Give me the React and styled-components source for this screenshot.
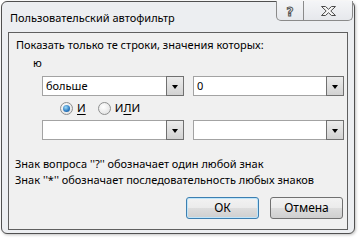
import React from "react";
import styled, { createGlobalStyle, css } from "styled-components";

const GlobalStyle = createGlobalStyle`
  html, body { margin: 0; padding: 0; background: #ffffff; }
  body {
    font-family: "Noto Sans", "Segoe UI", sans-serif;
    font-size: 11px;
    color: #000;
  }
`;

const Page = styled.div`
  width: 361px;
  height: 240px;
  overflow: hidden;
  background: #ffffff;
`;

const Window = styled.div`
  margin: 1px 0 0 1px;
  width: 354px;
  height: 233px;
  box-sizing: border-box;
  border: 1px solid #505050;
  border-radius: 6px;
  background: #eceef1;
  box-shadow: 1px 1px 3px rgba(0, 0, 0, 0.25);
  display: flex;
  flex-direction: column;
`;

const TitleBar = styled.div`
  height: 30px;
  flex: none;
  display: flex;
  justify-content: space-between;
  align-items: flex-start;
  padding: 0 1px 0 8px;
`;

const Title = styled.div`
  margin-top: 8px;
  line-height: 15px;
  font-size: 11px;
`;

const CaptionGroup = styled.div`
  display: flex;
  margin-top: -1px;
  height: 19px;
  border: 1px solid #8a8a8a;
  border-top: none;
  border-radius: 0 0 5px 5px;
  overflow: hidden;
  background: linear-gradient(#f4f5f7, #e6e8ec);
`;

const CaptionButton = styled.div`
  width: ${(p) => p.$w}px;
  display: flex;
  align-items: center;
  justify-content: center;
  ${(p) => p.$divider && css`border-right: 1px solid #8a8a8a;`}
`;

const HelpGlyph = styled.span`
  font-family: "DejaVu Sans", sans-serif;
  font-weight: bold;
  font-size: 12px;
  line-height: 12px;
  color: #f4f4f4;
  -webkit-text-stroke: 1px #555;
  margin-top: 2px;
`;

const Client = styled.div`
  flex: 1;
  margin: 0 6px 3px 6px;
  border: 1px solid #5f5f5f;
  background: #f0f0f0;
  display: flex;
  flex-direction: column;
`;

const Label = styled.div`
  margin: ${(p) => p.$mt || 0}px 0 0 ${(p) => p.$ml || 0}px;
  line-height: ${(p) => p.$lh || 16}px;
  white-space: nowrap;
`;

const ComboRow = styled.div`
  display: flex;
  gap: 9px;
  margin-top: ${(p) => p.$mt}px;
  padding-left: 33px;
`;

const Combo = styled.div`
  width: ${(p) => p.$w}px;
  height: 20px;
  box-sizing: border-box;
  border: 1px solid #a3a3a3;
  background: #fff;
  display: flex;
`;

const ComboText = styled.div`
  flex: 1;
  padding-left: 3px;
  line-height: 18px;
`;

const DropButton = styled.div`
  width: 18px;
  margin: -1px -1px -1px 0;
  box-sizing: border-box;
  border: 1px solid #707070;
  background: linear-gradient(#ececec, #d2d2d2);
  display: flex;
  align-items: center;
  justify-content: center;
`;

const Arrow = styled.div`
  width: 0;
  height: 0;
  border-left: 3.5px solid transparent;
  border-right: 3.5px solid transparent;
  border-top: 4px solid #000;
  margin-top: 1px;
`;

const RadioRow = styled.div`
  display: flex;
  align-items: center;
  height: 16px;
  margin-top: 4px;
  padding-left: 51px;
`;

const RadioItem = styled.label`
  display: flex;
  align-items: center;
  margin-right: 12px;
`;

const RadioCircle = styled.span`
  width: 13px;
  height: 13px;
  box-sizing: border-box;
  border-radius: 50%;
  border: 1px solid #8e8f8f;
  background: radial-gradient(circle at 40% 35%, #ffffff, #dcdcdc);
  display: flex;
  align-items: center;
  justify-content: center;
  margin-right: 4px;
  ${(p) =>
    p.$checked &&
    css`
      &::after {
        content: "";
        width: 7px;
        height: 7px;
        border-radius: 50%;
        background: radial-gradient(circle at 40% 35%, #9fdcf8, #2a78c0 60%, #184f86);
      }
    `}
`;

const RadioText = styled.span`
  line-height: 16px;
  font-size: 11.5px;
  u { text-decoration: underline; text-underline-offset: 2px; }
`;

const ButtonRow = styled.div`
  display: flex;
  justify-content: flex-end;
  gap: 11px;
  margin-top: 9px;
  padding-right: 4px;
`;

const Button = styled.div`
  width: 73px;
  height: 22px;
  box-sizing: border-box;
  border: 1px solid #707070;
  border-radius: 3px;
  background: linear-gradient(#f2f2f2 0%, #ebebeb 50%, #dddddd 51%, #cfcfcf 100%);
  display: flex;
  align-items: center;
  justify-content: center;
  line-height: 16px;
  font-size: 12px;
  ${(p) =>
    p.$default &&
    css`
      border-color: #3c7fb1;
      box-shadow: inset 0 0 0 1px #bfe5fa;
    `}
`;

export default function App() {
  return (
    <Page>
      <GlobalStyle />
      <Window>
        <TitleBar>
          <Title>Пользовательский автофильтр</Title>
          <CaptionGroup>
            <CaptionButton $w={26} $divider>
              <HelpGlyph>?</HelpGlyph>
            </CaptionButton>
            <CaptionButton $w={48}>
              <svg width="15" height="10" viewBox="0 0 15 10">
                <polygon
                  points="0.5,0.5 4.5,0.5 7.5,3.3 10.5,0.5 14.5,0.5 9.8,5 14.5,9.5 10.5,9.5 7.5,6.7 4.5,9.5 0.5,9.5 5.2,5"
                  fill="#f6f6f6"
                  stroke="#4a4a4a"
                  strokeWidth="1"
                />
              </svg>
            </CaptionButton>
          </CaptionGroup>
        </TitleBar>
        <Client>
          <Label $mt={4} $ml={7}>Показать только те строки, значения которых:</Label>
          <Label $mt={2} $ml={24} $lh={15}>ю</Label>
          <ComboRow $mt={6}>
            <Combo $w={142}>
              <ComboText>больше</ComboText>
              <DropButton><Arrow /></DropButton>
            </Combo>
            <Combo $w={151}>
              <ComboText>0</ComboText>
              <DropButton><Arrow /></DropButton>
            </Combo>
          </ComboRow>
          <RadioRow>
            <RadioItem>
              <RadioCircle $checked />
              <RadioText><u>И</u></RadioText>
            </RadioItem>
            <RadioItem>
              <RadioCircle />
              <RadioText>И<u>Л</u>И</RadioText>
            </RadioItem>
          </RadioRow>
          <ComboRow $mt={4}>
            <Combo $w={142}>
              <ComboText />
              <DropButton><Arrow /></DropButton>
            </Combo>
            <Combo $w={151}>
              <ComboText />
              <DropButton><Arrow /></DropButton>
            </Combo>
          </ComboRow>
          <Label $mt={16} $ml={6}>Знак вопроса ''?'' обозначает один любой знак</Label>
          <Label $ml={6}>Знак ''*'' обозначает последовательность любых знаков</Label>
          <ButtonRow>
            <Button $default>ОК</Button>
            <Button>Отмена</Button>
          </ButtonRow>
        </Client>
      </Window>
    </Page>
  );
}
